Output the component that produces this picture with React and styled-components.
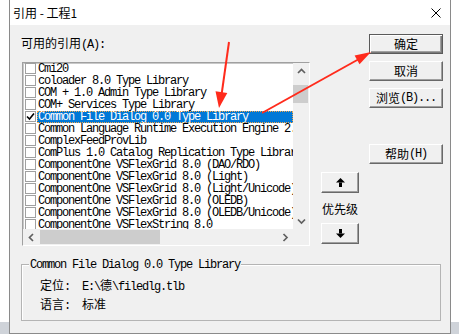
import React from "react";
import styled, { createGlobalStyle, css } from "styled-components";

const GlobalStyle = createGlobalStyle`
  html, body {
    margin: 0;
    padding: 0;
  }
  body {
    width: 459px;
    height: 334px;
    overflow: hidden;
    background: linear-gradient(to bottom, #ffffff 322px, #cfd3d9 322px);
    font-family: "Noto Sans CJK SC", sans-serif;
    font-size: 12px;
    color: #000;
  }
`;

const references = [
  { name: "Cmi20" },
  { name: "coloader 8.0 Type Library" },
  { name: "COM + 1.0 Admin Type Library" },
  { name: "COM+ Services Type Library" },
  { name: "Common File Dialog 0.0 Type Library", checked: true, selected: true },
  { name: "Common Language Runtime Execution Engine 2.4 Library" },
  { name: "ComplexFeedProvLib" },
  { name: "ComPlus 1.0 Catalog Replication Type Library" },
  { name: "ComponentOne VSFlexGrid 8.0 (DAO/RDO)" },
  { name: "ComponentOne VSFlexGrid 8.0 (Light)" },
  { name: "ComponentOne VSFlexGrid 8.0 (Light/Unicode)" },
  { name: "ComponentOne VSFlexGrid 8.0 (OLEDB)" },
  { name: "ComponentOne VSFlexGrid 8.0 (OLEDB/Unicode)" },
  { name: "ComponentOne VSFlexString 8.0" },
];

function Chevron({ dir }) {
  const paths = {
    up: "M1 5 L4.5 1.5 L8 5",
    down: "M1 1.5 L4.5 5 L8 1.5",
    left: "M5 1 L1.5 4.5 L5 8",
    right: "M1.5 1 L5 4.5 L1.5 8",
  };
  const vertical = dir === "up" || dir === "down";
  return (
    <svg
      width={vertical ? 9 : 7}
      height={vertical ? 7 : 9}
      viewBox={vertical ? "0 0 9 7" : "0 0 7 9"}
    >
      <path d={paths[dir]} fill="none" stroke="#606060" strokeWidth="1.7" />
    </svg>
  );
}

function MoveArrow({ down }) {
  return (
    <svg width="9" height="9" viewBox="0 0 9 9">
      <g transform={down ? "rotate(180 4.5 4.5)" : undefined}>
        <polygon points="4.5,0 9,4.5 0,4.5" fill="#000" />
        <rect x="3" y="4.5" width="3" height="4.5" fill="#000" />
      </g>
    </svg>
  );
}

export default function App() {
  return (
    <>
      <GlobalStyle />
      <Page>
        <Dialog>
          <TitleBar>
            <Title>引用 - 工程1</Title>
            <svg width="10" height="10" viewBox="0 0 10 10">
              <path d="M0.5 0.5 L9.5 9.5 M9.5 0.5 L0.5 9.5" stroke="#000" strokeWidth="1" />
            </svg>
          </TitleBar>
          <Body>
            <TopArea>
              <ListColumn>
                <FieldLabel>
                  可用的引用<Mono>(A):</Mono>
                </FieldLabel>
                <ListBox>
                  <Viewport>
                    {references.map((item) => (
                      <Row key={item.name}>
                        <CheckBox>
                          {item.checked && (
                            <svg width="9" height="9" viewBox="0 0 9 9">
                              <path d="M1 4.5 L3.5 7 L8 1.5" fill="none" stroke="#000" strokeWidth="1.6" />
                            </svg>
                          )}
                        </CheckBox>
                        <ItemText $selected={item.selected}>{item.name}</ItemText>
                      </Row>
                    ))}
                  </Viewport>
                  <VScroll>
                    <ArrowCell>
                      <Chevron dir="up" />
                    </ArrowCell>
                    <VTrack>
                      <VThumb $offset={6} />
                    </VTrack>
                    <ArrowCell>
                      <Chevron dir="down" />
                    </ArrowCell>
                  </VScroll>
                  <HScroll>
                    <ArrowCell>
                      <Chevron dir="left" />
                    </ArrowCell>
                    <HTrack>
                      <HThumb />
                    </HTrack>
                    <ArrowCell>
                      <Chevron dir="right" />
                    </ArrowCell>
                  </HScroll>
                  <Corner />
                </ListBox>
              </ListColumn>

              <PriorityColumn>
                <SmallButton>
                  <MoveArrow />
                </SmallButton>
                <PriorityLabel>优先级</PriorityLabel>
                <SmallButton $gap={8}>
                  <MoveArrow down />
                </SmallButton>
              </PriorityColumn>

              <ButtonColumn>
                <Button $default>确定</Button>
                <Button>取消</Button>
                <Button>
                  浏览<Mono>(B)...</Mono>
                </Button>
                <Button $spaced>
                  帮助<Mono>(H)</Mono>
                </Button>
              </ButtonColumn>
            </TopArea>

            <GroupBox>
              <Legend>
                <Mono>Common File Dialog 0.0 Type Library</Mono>
              </Legend>
              <InfoGrid>
                <span>
                  定位<Mono>:</Mono>
                </span>
                <span>
                  <Mono>{"E:\\"}</Mono>德<Mono>{"\\filedlg.tlb"}</Mono>
                </span>
                <span>
                  语言<Mono>:</Mono>
                </span>
                <span>标准</span>
              </InfoGrid>
            </GroupBox>
          </Body>
        </Dialog>

        <Annotations width="459" height="334" viewBox="0 0 459 334">
          <line x1="229" y1="42" x2="221.5" y2="95" stroke="#ff2b1c" strokeWidth="2" />
          <polygon points="219,108 215.5,91.3 227.3,93.1" fill="#ff2b1c" />
          <line x1="262" y1="113" x2="359" y2="59" stroke="#ff2b1c" strokeWidth="2" />
          <polygon points="371,52 354.6,55.4 359.5,64.2" fill="#ff2b1c" />
        </Annotations>
      </Page>
    </>
  );
}

const Page = styled.div`
  position: relative;
  width: 459px;
  height: 334px;
  padding-left: 9px;
  box-sizing: border-box;
`;

const Dialog = styled.div`
  width: 442px;
  height: 334px;
  box-sizing: border-box;
  border: 1px solid #8a8a8a;
  border-top: none;
  display: flex;
  flex-direction: column;
  background: #f0f0f0;
`;

const TitleBar = styled.div`
  height: 25px;
  flex-shrink: 0;
  background: #ffffff;
  display: flex;
  align-items: center;
  justify-content: space-between;
  padding: 0 9px 0 3px;
`;

const Title = styled.span`
  font-size: 12px;
  line-height: 14px;
`;

const Body = styled.div`
  flex: 1;
  padding: 9px 6px 0 11px;
`;

const Mono = styled.span`
  font-family: "Liberation Mono", monospace;
  font-size: 12px;
  letter-spacing: -1.2px;
`;

const TopArea = styled.div`
  display: flex;
  align-items: flex-start;
`;

const ListColumn = styled.div`
  width: 289px;
  display: flex;
  flex-direction: column;
`;

const FieldLabel = styled.div`
  margin-top: 3px;
  line-height: 12px;
  height: 12px;
  white-space: nowrap;
`;

const ListBox = styled.div`
  margin: 13px 0 0 1px;
  width: 288px;
  height: 184px;
  box-sizing: border-box;
  border: 1px solid;
  border-color: #a0a0a0 #ffffff #ffffff #a0a0a0;
  box-shadow: inset 1px 1px 0 #c8c8c8;
  background: #ffffff;
  display: grid;
  grid-template-columns: 1fr 16px;
  grid-template-rows: 1fr 16px;
`;

const Viewport = styled.div`
  overflow: hidden;
  min-width: 0;
`;

const Row = styled.div`
  height: 12px;
  display: flex;
  align-items: flex-start;
  padding-left: 2px;
  font-family: "Liberation Mono", monospace;
  font-size: 12px;
  letter-spacing: -1.2px;
  line-height: 12px;
  white-space: nowrap;
`;

const CheckBox = styled.div`
  flex-shrink: 0;
  width: 11px;
  height: 11px;
  box-sizing: border-box;
  border: 1px solid #a0a0a0;
  background: #ffffff;
  margin-right: 1px;
  display: flex;
  align-items: center;
  justify-content: center;
`;

const ItemText = styled.span`
  flex: 1;
  height: 12px;
  padding: 0 1px;
  box-sizing: border-box;
  ${(p) =>
    p.$selected &&
    css`
      background: #0078d7;
      color: #ffffff;
      outline: 1px dotted #f3a64a;
      outline-offset: -1px;
    `}
`;

const VScroll = styled.div`
  background: #f0f0f0;
  display: flex;
  flex-direction: column;
`;

const HScroll = styled.div`
  background: #f0f0f0;
  display: flex;
  align-items: stretch;
`;

const Corner = styled.div`
  background: #f0f0f0;
`;

const ArrowCell = styled.div`
  width: 16px;
  height: 16px;
  flex-shrink: 0;
  display: flex;
  align-items: center;
  justify-content: center;
`;

const VTrack = styled.div`
  flex: 1;
`;

const VThumb = styled.div`
  margin-top: ${(p) => p.$offset}px;
  margin-right: 1px;
  height: 18px;
  background: #cdcdcd;
`;

const HTrack = styled.div`
  flex: 1;
  display: flex;
  align-items: center;
`;

const HThumb = styled.div`
  margin-left: 1px;
  width: 120px;
  height: 14px;
  background: #cdcdcd;
`;

const PriorityColumn = styled.div`
  width: 38px;
  margin-left: 11px;
  padding-top: 138px;
  display: flex;
  flex-direction: column;
  align-items: center;
`;

const PriorityLabel = styled.div`
  margin-top: 10px;
  height: 12px;
  line-height: 12px;
  white-space: nowrap;
`;

const raised = css`
  box-sizing: border-box;
  padding: 0;
  background: #f0f0f0;
  color: #000;
  border: 1px solid;
  border-color: #ffffff #696969 #696969 #ffffff;
  box-shadow: inset -1px -1px 0 #a0a0a0;
  display: flex;
  align-items: center;
  justify-content: center;
`;

const SmallButton = styled.button`
  ${raised}
  width: 38px;
  height: 21px;
  margin-top: ${(p) => p.$gap || 0}px;
`;

const ButtonColumn = styled.div`
  width: 74px;
  margin-left: 10px;
  display: flex;
  flex-direction: column;
  gap: 7px;
`;

const Button = styled.button`
  ${raised}
  width: 74px;
  height: 20px;
  font-family: "Noto Sans CJK SC", sans-serif;
  font-size: 12px;
  line-height: 12px;
  white-space: nowrap;
  margin-top: ${(p) => (p.$spaced ? 29 : 0)}px;
  ${(p) =>
    p.$default &&
    css`
      border-color: #5a5a5a;
      box-shadow: inset 1px 1px 0 #ffffff, inset -1px -1px 0 #7a7a7a,
        inset -2px -2px 0 #a0a0a0;
    `}
`;

const GroupBox = styled.fieldset`
  margin: 11px 0 0 0;
  width: 420px;
  box-sizing: border-box;
  padding: 0 0 10px 7px;
  border: 1px solid #b4b4b4;
  box-shadow: inset 1px 1px 0 #ffffff;
  min-inline-size: 0;
`;

const Legend = styled.legend`
  padding: 0 1px;
  line-height: 12px;
  background: #f0f0f0;
  white-space: nowrap;
`;

const InfoGrid = styled.div`
  margin-top: 8px;
  padding-left: 11px;
  display: grid;
  grid-template-columns: 42px auto;
  row-gap: 7px;
  line-height: 12px;
  white-space: nowrap;

  & > span {
    height: 12px;
  }
`;

const Annotations = styled.svg`
  position: absolute;
  top: 0;
  left: 0;
  pointer-events: none;
`;
